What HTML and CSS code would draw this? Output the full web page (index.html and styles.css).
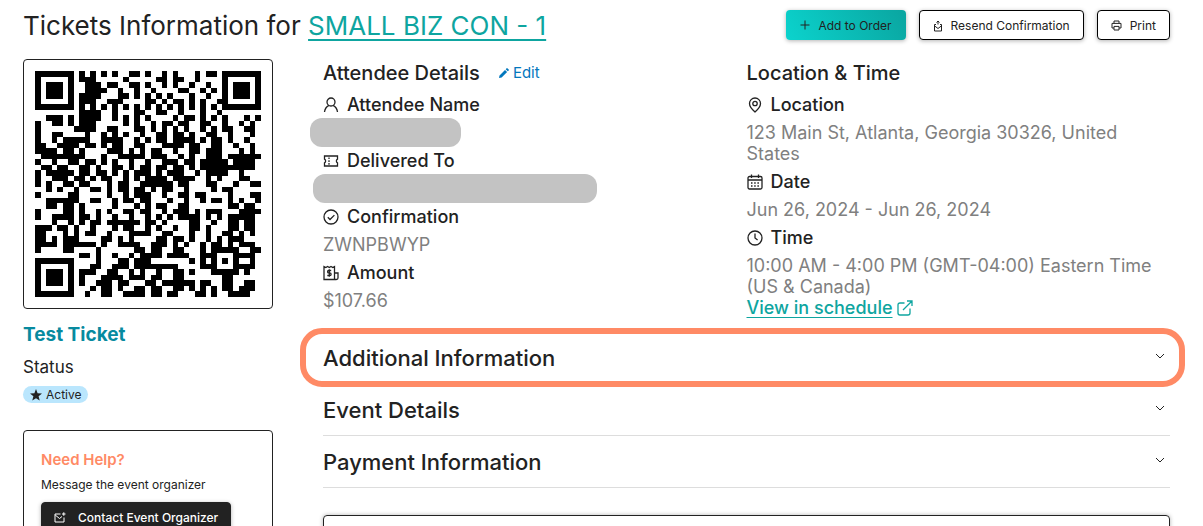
FILE: index.html
```html
<!DOCTYPE html>
<html lang="en">
<head>
    <meta charset="UTF-8">
    <meta name="viewport" content="width=device-width, initial-scale=1.0">
    <title>Tickets Information</title>
    <link rel="stylesheet" href="styles.css">
</head>
<body>
    <header class="page-header">
        <h1>Tickets Information for <a href="#">SMALL BIZ CON - 1</a></h1>
        <div class="actions">
            <button type="button" class="btn btn-teal">
                <svg width="10" height="10" viewBox="0 0 10 10"><path d="M5 .5v9M.5 5h9"/></svg>
                Add to Order
            </button>
            <button type="button" class="btn">
                <svg width="10" height="14" viewBox="0 0 10 14"><path d="M5 6.500V3M3.500 4.500L5 3l1.500 1.500M3 6.500H1.500V13h7V6.500H7M1.700 8L5 10.500 8.300 8"/></svg>
                Resend Confirmation
            </button>
            <button type="button" class="btn">
                <svg width="11" height="11" viewBox="0 0 11 11"><path d="M3 3.200V1h5v2.200M3 8H1V3.400h9V8H8M3 6.400h5V10H3z"/></svg>
                Print
            </button>
        </div>
    </header>

    <main class="layout">
        <aside class="sidebar">
            <div class="qr-box">
                <svg id="qr" viewBox="0 0 41 41" role="img" aria-label="Ticket QR code"></svg>
            </div>
            <h2 class="ticket-name">Test Ticket</h2>
            <div class="status-label">Status</div>
            <span class="badge">
                <svg width="12" height="12" viewBox="0 0 12 12"><path d="M6 0l1.600 4.200 4.400.2-3.400 2.800 1.100 4.400L6 9.200l-3.700 2.400 1.100-4.400L0 4.400l4.400-.2z"/></svg>
                Active
            </span>
            <section class="help-card">
                <h3>Need Help?</h3>
                <p>Message the event organizer</p>
                <button type="button" class="btn btn-dark">
                    <svg width="12" height="11" viewBox="0 0 12 11"><path d="M6.500 2H1v8h9V5.500M1.200 3l4.300 3.500L8 4.500M8 2h3.500M9.800.3v3.500"/></svg>
                    Contact Event Organizer
                </button>
            </section>
        </aside>

        <div class="content">
            <div class="details">
                <section>
                    <h2 class="col-title">Attendee Details
                        <a href="#" class="edit"><svg width="10" height="10" viewBox="0 0 10 10"><path d="M0 10l.5-2.600L6 1.900 8.100 4 2.600 9.500zM6.700 1.200L7.600.3Q8 0 8.400.3l1.300 1.300q.4.4 0 .8l-.9.9z"/></svg>Edit</a>
                    </h2>
                    <h3 class="label">
                        <svg viewBox="0 0 16 16"><circle cx="8" cy="5" r="4"/><path d="M1.500 15c.4-3.500 2-5.500 4.500-6.700M14.500 15c-.4-3.500-2-5.500-4.500-6.700"/></svg>
                        Attendee Name
                    </h3>
                    <div class="redacted name"></div>
                    <h3 class="label">
                        <svg viewBox="0 0 16 16"><path d="M1.500 3h13v3.200a2 2 0 0 0 0 3.600V13h-13V9.800a2 2 0 0 0 0-3.600zM6 4.500v1.600M6 7.300v1.600M6 10.100v1.600"/></svg>
                        Delivered To
                    </h3>
                    <div class="redacted email"></div>
                    <h3 class="label">
                        <svg viewBox="0 0 16 16"><circle cx="8" cy="8" r="7"/><path d="M4.800 8.300l2.200 2.200 4.400-4.400"/></svg>
                        Confirmation
                    </h3>
                    <p class="value">ZWNPBWYP</p>
                    <h3 class="label">
                        <svg viewBox="0 0 16 16"><path d="M11.500 14.500H1v-13l1.800 1 1.800-1 1.700 1 1.700-1 1.700 1 1.800-1zM11.500 8H15v5q0 1.500-1.700 1.500h-1.800M8.200 5.500H5.600q-1 0-1 1.200t1 1.200h1.300q1.200 0 1.200 1.300t-1.200 1.300H4.300M6.300 4.300v7.400"/></svg>
                        Amount
                    </h3>
                    <p class="value">$107.66</p>
                </section>

                <section>
                    <h2 class="col-title">Location &amp; Time</h2>
                    <h3 class="label">
                        <svg viewBox="0 0 16 16"><path d="M8 15C4 11.500 2.500 9 2.500 6.500a5.500 5.500 0 0 1 11 0C13.500 9 12 11.500 8 15z"/><circle cx="8" cy="6.500" r="2.200"/></svg>
                        Location
                    </h3>
                    <p class="value">123 Main St, Atlanta, Georgia 30326, United States</p>
                    <h3 class="label">
                        <svg viewBox="0 0 16 16"><rect x="1" y="2.500" width="14" height="12.500" rx="1.500"/><path d="M1 6h14M4.500.5V4M11.500.5V4"/><path d="M4 9h8M4 12h8" stroke-dasharray="1.500 1.700"/></svg>
                        Date
                    </h3>
                    <p class="value">Jun 26, 2024 - Jun 26, 2024</p>
                    <h3 class="label">
                        <svg viewBox="0 0 16 16"><circle cx="8" cy="8" r="7"/><path d="M8 3.500V8l2.600 2"/></svg>
                        Time
                    </h3>
                    <p class="value">10:00 AM - 4:00 PM (GMT-04:00) Eastern Time (US &amp; Canada)</p>
                    <a href="#" class="schedule-link">View in schedule
                        <svg viewBox="0 0 16 16"><path d="M7.500 3H3Q1 3 1 5v8q0 2 2 2h8q2 0 2-2V8.500M10 1h5v5M15 1L6 10"/></svg>
                    </a>
                </section>
            </div>

            <div class="accordion">
                <button type="button" class="accordion-item highlighted" aria-expanded="false">
                    Additional Information
                    <svg width="10" height="6" viewBox="0 0 10 6"><path d="M1 1l4 4 4-4"/></svg>
                </button>
                <button type="button" class="accordion-item" aria-expanded="false">
                    Event Details
                    <svg width="10" height="6" viewBox="0 0 10 6"><path d="M1 1l4 4 4-4"/></svg>
                </button>
                <button type="button" class="accordion-item" aria-expanded="false">
                    Payment Information
                    <svg width="10" height="6" viewBox="0 0 10 6"><path d="M1 1l4 4 4-4"/></svg>
                </button>
            </div>

            <section class="panel"></section>
        </div>
    </main>
    <script src="qr.js"></script>
</body>
</html>
```
FILE: qr.js
```js
// one string per row, # is a dark module
const rows = [
    '#######.#.#.#.#..##.#..#.#...#.##.#######',
    '#.....#.###.....#.....##.##..#....#.....#',
    '#.###.#..###.##..##.#..#.#..#..#..#.###.#',
    '#.###.#..####..#..#..#....##..#.#.#.###.#',
    '#.###.#.####...##.#.#.#.#...#..#..#.###.#',
    '#.....#.###..###....##.#.##.#.#..##.....#',
    '#######.#.#.#.#.#.#.#.#.#.#.#.#.#.#######',
    '........####..#...##..##..#...#..#.......',
    '..###.#.####..#.#.#.#....#.##.#.#.#...#.#',
    '#..##.#.###.....#.#..#.##.##..##..#..#.#.',
    '#......####..##...##.#.#.#.#..#.#.##..##.',
    '#..##....#..#.#.#..#..##.##.#..##..#...#.',
    '#..#.#####..####..#.#.##.####.#.##.#..#..',
    '##..####.##.#.##..##...####.##..##..#..#.',
    '####.##.#....###.#.#.##..#..##.###...#.#.',
    '.########...#..#####.###..#.#..###.######',
    '#..#..##.##.#.#..#..#..###.##.#####.####.',
    '.##.##..##.#..##.#.##.##.##.#.##########.',
    '#.#####.##.##.#.#.###.#.###..#.####..#...',
    '#..###.##.#.##..#.#.####.####..#.#...##..',
    '#.#..##.##...#.##..######.##...##...#..##',
    '..#.#..#..##.#.##.##.#.##..#....#.##.....',
    '#.....##.....#..#.###..#..##.##....#...##',
    '..######..##..#.##.##...#..#..#.##.#.#..#',
    '..##.##.#.....#...#.#.##..##.......##.##.',
    '#....##.#..#.#..##.##..#.###.#.###...####',
    '#..####.##.#..#..#..#.#.#.####.#.#.#####.',
    '...#..#.#.##.######.##.#....##..#..##.##.',
    '###.##.#..#...#.##..#.#..#..##.#...##.##.',
    '##...#.#.##..#...####..##...#..#..##.#.#.',
    '##.#.###....##.#.#....##.##.#..#.#.###...',
    '####.######.#..####..###.#.#..#.##.#.###.',
    '#....##....#......##.##..##...#.#####..##',
    '........##.#..#..#.####.####..###...####.',
    '#######....#...##.###.......#.#.#.#.#..#.',
    '#.....#...##..###.########....###...####.',
    '#.###.#.###..##..#.#..#..##.#...#####.#..',
    '#.###.#.#...####.###.##..##.......##.....',
    '#.###.#.#..###.##...##.######.##..##..##.',
    '#.....#...#.##.#..##.##..##.#.#.#.##.###.',
    '#######..#..##..####.##.##...##.#..####..'
];

let path = '';
rows.forEach((row, y) => {
    for (let x = 0; x < row.length; x++) {
        if (row[x] === '#') path += `M${x} ${y}h1v1h-1z`;
    }
});
document.getElementById('qr').innerHTML = `<path d="${path}"/>`;
```
FILE: styles.css
```css
* {
    box-sizing: border-box;
}
body {
    margin: 0;
    padding: 10px 33px 0 23px;
    font-family: Inter, "Open Sans", sans-serif;
    color: #222;
    background: #fff;
}
h1, h2, h3, p {
    margin: 0;
    font-weight: 500;
}
svg {
    flex: none;
    fill: none;
    stroke: currentColor;
}
a {
    color: #0ea5a0;
}
.page-header {
    display: flex;
    justify-content: space-between;
    align-items: center;
    height: 30px;
    margin-bottom: 19px;
}
h1 {
    padding-top: 2px;
    font-size: 26px;
    font-weight: 400;
    line-height: 34px;
}
h1 a {
    text-decoration-thickness: 2px;
    text-underline-offset: 4px;
}
.actions {
    display: flex;
    gap: 13px;
}
.btn {
    display: flex;
    align-items: center;
    gap: 8px;
    height: 30px;
    padding: 0 13px;
    border: 1px solid #000;
    border-radius: 4px;
    background: #fff;
    box-shadow: 0 1px 4px rgba(0, 0, 0, 0.3);
    color: #222;
    font-family: inherit;
    font-size: 12px;
    white-space: nowrap;
    cursor: pointer;
}
.btn-teal {
    border-color: transparent;
    background: linear-gradient(60deg, #0bd3cd, #0aa5a0) border-box;
}
.btn-dark {
    gap: 12px;
    padding: 0 12px;
    border-color: #222;
    background: #222;
    color: #fff;
    font-weight: 500;
}
.layout {
    display: grid;
    grid-template-columns: 250px 1fr;
    gap: 50px;
}
.qr-box {
    height: 250px;
    padding: 11px;
    border: 1px solid #222;
    border-radius: 4px;
}
.qr-box svg {
    display: block;
    width: 226px;
    height: 226px;
    fill: #000;
    stroke: none;
    shape-rendering: crispEdges;
}
.ticket-name {
    margin-top: 12px;
    color: #078a9f;
    font-size: 19px;
    font-weight: 700;
    line-height: 28px;
}
.status-label {
    margin: 6px 0 7px;
    font-size: 17px;
    line-height: 24px;
}
.badge {
    display: flex;
    align-items: center;
    gap: 4px;
    width: fit-content;
    height: 17px;
    padding: 0 7px;
    border-radius: 9px;
    background: #bae6fd;
    font-size: 12px;
}
.badge svg {
    fill: #222;
    stroke: none;
}
.help-card {
    margin-top: 27px;
    padding: 17px;
    border: 1px solid #222;
    border-radius: 4px;
}
.help-card h3 {
    color: #ff8a65;
    font-size: 15px;
    font-weight: 600;
    line-height: 24px;
}
.help-card p {
    margin: 3px 0 7px;
    font-size: 12px;
    font-weight: 400;
    line-height: 20px;
}
.details {
    display: grid;
    grid-template-columns: 1fr 1fr;
}
.col-title {
    display: flex;
    align-items: center;
    gap: 19px;
    font-size: 20px;
    line-height: 28px;
}
.edit {
    display: flex;
    align-items: center;
    gap: 4px;
    color: #0277bd;
    font-size: 15px;
    font-weight: 400;
    text-decoration: none;
}
.edit svg {
    fill: currentColor;
    stroke: none;
}
.label {
    display: flex;
    align-items: center;
    gap: 8px;
    font-size: 18px;
    line-height: 35px;
}
.label svg,
.schedule-link svg {
    width: 16px;
    height: 16px;
    stroke-width: 1.3;
}
.value {
    color: #808080;
    font-size: 18px;
    font-weight: 400;
    line-height: 21px;
}
.redacted {
    height: 29px;
    margin: -4px 0 -4px -13px;
    border-radius: 12px;
    background: #c3c3c3;
}
.redacted.name {
    width: 151px;
}
.redacted.email {
    width: 284px;
    margin-left: -10px;
}
.schedule-link {
    display: flex;
    align-items: center;
    gap: 4px;
    width: fit-content;
    font-size: 18px;
    font-weight: 500;
    line-height: 21px;
    text-underline-offset: 3px;
}
.accordion {
    margin-top: 14px;
}
.accordion-item {
    position: relative;
    display: flex;
    justify-content: space-between;
    align-items: center;
    width: 100%;
    height: 52px;
    padding: 0 5px 0 0;
    border: 0;
    border-bottom: 1px solid #ddd;
    background: none;
    color: #222;
    font-family: inherit;
    font-size: 22px;
    font-weight: 500;
    cursor: pointer;
}
.accordion-item svg {
    margin-bottom: 4px;
}
.highlighted::after {
    content: "";
    position: absolute;
    inset: -4px -15px -4px -23px;
    border: 6px solid #ff8a65;
    border-radius: 22px;
}
.panel {
    height: 60px;
    margin-top: 27px;
    border: 1px solid #222;
    border-radius: 4px;
    box-shadow: 0 0 4px rgba(0, 0, 0, 0.3);
}
```
